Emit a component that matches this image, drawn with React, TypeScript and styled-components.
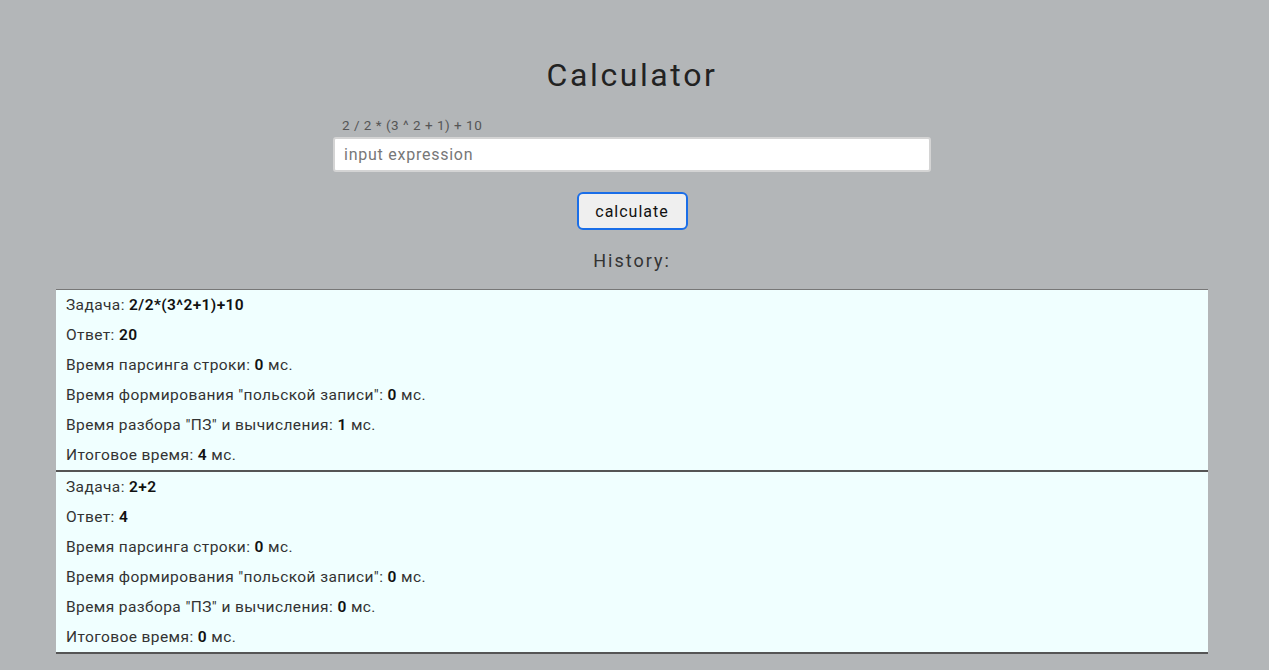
import styled, { createGlobalStyle } from 'styled-components';

const GlobalStyle = createGlobalStyle`
  html, body {
    margin: 0;
    padding: 0;
    background-color: #b3b6b8;
    font-family: 'Roboto', 'Liberation Sans', sans-serif;
  }
`;

const StyledPage = styled.main`
  align-items: center;
  display: flex;
  flex-direction: column;
  padding-top: 52px;
  width: 1264px;
`;

const StyledTitle = styled.h1`
  color: #222;
  font-size: 32px;
  font-weight: 400;
  letter-spacing: 2.6px;
  line-height: 46px;
  margin: 0 0 19px;
`;

const StyledForm = styled.div`
  display: flex;
  flex-direction: column;
  width: 598px;
`;

const StyledHint = styled.label`
  color: #555;
  font-size: 13.5px;
  letter-spacing: 0.5px;
  line-height: 16px;
  padding-left: 9px;
  margin-bottom: 4px;
`;

const StyledInput = styled.input`
  background: #fff;
  border: 2px solid #d4d4d4;
  border-radius: 3px;
  box-sizing: border-box;
  color: #222;
  font-family: inherit;
  font-size: 16px;
  height: 35px;
  letter-spacing: 0.75px;
  outline: none;
  padding: 0 9px;
  width: 100%;
  &::placeholder {
    color: #777;
  }
`;

const StyledButton = styled.button`
  background: #efefef;
  border: 2px solid #1a6ee8;
  border-radius: 6px;
  color: #111;
  cursor: pointer;
  font-family: inherit;
  font-size: 16px;
  height: 38px;
  letter-spacing: 1px;
  margin-top: 20px;
  width: 111px;
`;

const StyledHistoryTitle = styled.h2`
  color: #333;
  font-size: 18px;
  font-weight: 400;
  letter-spacing: 2px;
  line-height: 24px;
  margin: 19px 0 16px;
`;

const StyledList = styled.ul`
  border-top: 1px solid #777;
  list-style: none;
  margin: 0;
  padding: 0;
  width: 1152px;
`;

const StyledItem = styled.li`
  background-color: #f0ffff;
  border-bottom: 2px solid #555;
  padding: 0 10px;
`;

const StyledRow = styled.p`
  color: #333;
  font-size: 15.5px;
  letter-spacing: 0.4px;
  line-height: 30px;
  margin: 0;
`;

const StyledValue = styled.b`
  color: #111;
  font-weight: 600;
`;

type Entry = {
  task: string;
  answer: string;
  parse: number;
  polish: number;
  calc: number;
  total: number;
};

const history: Entry[] = [
  { task: '2/2*(3^2+1)+10', answer: '20', parse: 0, polish: 0, calc: 1, total: 4 },
  { task: '2+2', answer: '4', parse: 0, polish: 0, calc: 0, total: 0 },
];

const App = () => (
  <>
    <GlobalStyle />
    <StyledPage>
      <StyledTitle>Calculator</StyledTitle>
      <StyledForm>
        <StyledHint>2 / 2 * (3 ^ 2 + 1) + 10</StyledHint>
        <StyledInput placeholder="input expression" />
      </StyledForm>
      <StyledButton>calculate</StyledButton>
      <StyledHistoryTitle>History:</StyledHistoryTitle>
      <StyledList>
        {history.map((entry, i) => (
          <StyledItem key={i}>
            <StyledRow>
              Задача: <StyledValue>{entry.task}</StyledValue>
            </StyledRow>
            <StyledRow>
              Ответ: <StyledValue>{entry.answer}</StyledValue>
            </StyledRow>
            <StyledRow>
              Время парсинга строки: <StyledValue>{entry.parse}</StyledValue> мс.
            </StyledRow>
            <StyledRow>
              Время формирования "польской записи": <StyledValue>{entry.polish}</StyledValue> мс.
            </StyledRow>
            <StyledRow>
              Время разбора "ПЗ" и вычисления: <StyledValue>{entry.calc}</StyledValue> мс.
            </StyledRow>
            <StyledRow>
              Итоговое время: <StyledValue>{entry.total}</StyledValue> мс.
            </StyledRow>
          </StyledItem>
        ))}
      </StyledList>
    </StyledPage>
  </>
);

export default App;
